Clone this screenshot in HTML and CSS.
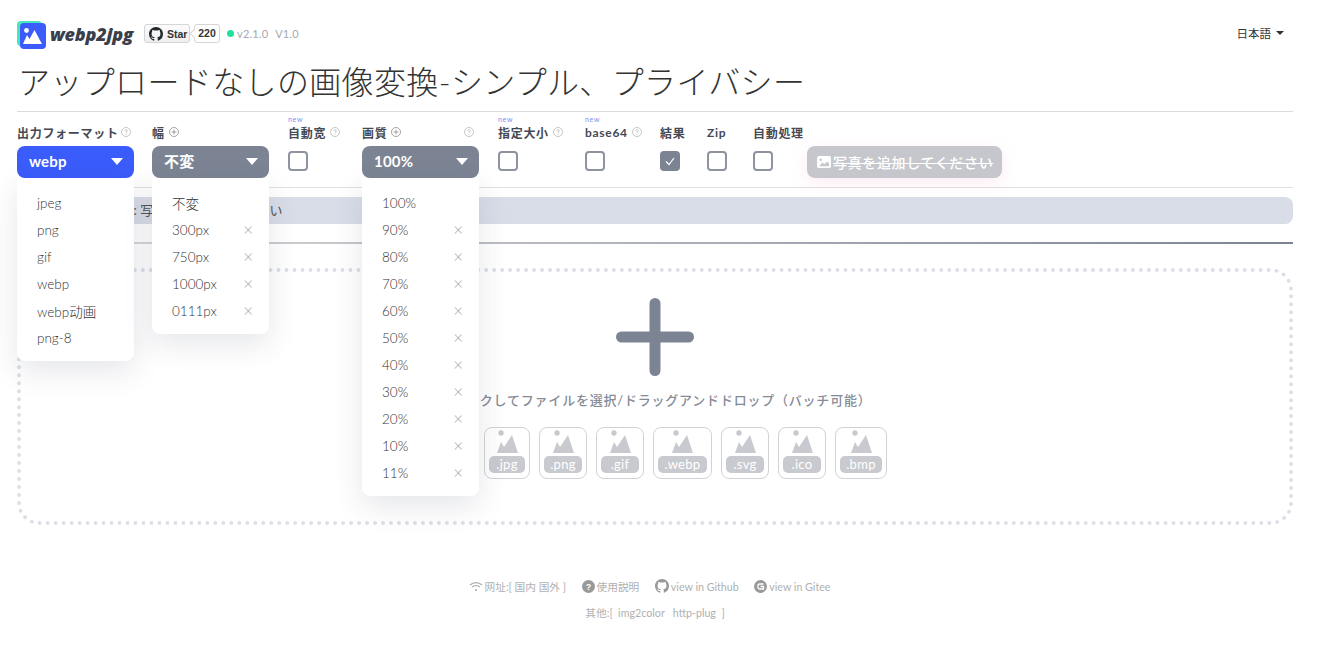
FILE: index.html
```html
<!DOCTYPE html>
<html lang="ja">
<head>
    <meta charset="UTF-8">
    <title>webp2jpg</title>
    <link rel="stylesheet" href="styles.css">
</head>
<body>
<div class="page">

    <header class="top">
        <svg class="logo" width="30" height="28" viewBox="0 0 30 28">
            <rect x="0" y="0" width="25" height="25" rx="4" fill="#45e6c0"/>
            <rect x="3" y="2" width="26" height="26" rx="4" fill="#3b5bfb"/>
            <circle cx="9.5" cy="9.5" r="2.4" fill="#fff"/>
            <path d="M6 23 L10 14 L12.5 18 L17.5 9 L25 23 Z" fill="#fff"/>
        </svg>
        <span class="brand">webp2jpg</span>
        <span class="star">
            <svg width="14" height="14" viewBox="0 0 16 16"><path fill="#24292e" d="M8 0C3.58 0 0 3.58 0 8c0 3.54 2.29 6.53 5.47 7.59.4.07.55-.17.55-.38 0-.19-.01-.82-.01-1.49-2.01.37-2.53-.49-2.69-.94-.09-.23-.48-.94-.82-1.13-.28-.15-.68-.52-.01-.53.63-.01 1.08.58 1.23.82.72 1.21 1.87.87 2.33.66.07-.52.28-.87.51-1.07-1.78-.2-3.64-.89-3.64-3.95 0-.87.31-1.59.82-2.15-.08-.2-.36-1.02.08-2.12 0 0 .67-.21 2.2.82.64-.18 1.32-.27 2-.27s1.36.09 2 .27c1.53-1.04 2.2-.82 2.2-.82.44 1.1.16 1.92.08 2.12.51.56.82 1.27.82 2.15 0 3.07-1.87 3.75-3.65 3.95.29.25.54.73.54 1.48 0 1.07-.01 1.93-.01 2.2 0 .21.15.46.55.38A8.01 8.01 0 0016 8c0-4.42-3.58-8-8-8z"/></svg>
            Star
        </span>
        <span class="star-count">220</span>
        <span class="dot"></span>
        <span class="version">v2.1.0</span>
        <span class="version">V1.0</span>
        <span class="lang">日本語<i class="caret"></i></span>
    </header>

    <h1 class="title">アップロードなしの画像変換-シンプル、プライバシー</h1>

    <section class="controls">
        <div class="col col-select col-format">
            <label class="name">出力フォーマット<svg class="tip tip-near" viewBox="0 0 12 12"><use href="#help"/></svg></label>
            <div class="select select-blue">webp<i class="arrow"></i></div>
            <ul class="menu">
                <li>jpeg</li>
                <li>png</li>
                <li>gif</li>
                <li>webp</li>
                <li>webp动画</li>
                <li>png-8</li>
            </ul>
        </div>

        <div class="col col-select">
            <label class="name">幅<svg class="tip" viewBox="0 0 12 12"><use href="#plus"/></svg></label>
            <div class="select">不変<i class="arrow"></i></div>
            <ul class="menu">
                <li>不変</li>
                <li>300px<span class="del">×</span></li>
                <li>750px<span class="del">×</span></li>
                <li>1000px<span class="del">×</span></li>
                <li>0111px<span class="del">×</span></li>
            </ul>
        </div>

        <div class="col col-auto">
            <label class="name"><em class="new">new</em>自動宽<svg class="tip" viewBox="0 0 12 12"><use href="#help"/></svg></label>
            <span class="check"></span>
        </div>

        <div class="col col-select col-quality">
            <label class="name">画質<svg class="tip" viewBox="0 0 12 12"><use href="#plus"/></svg><svg class="tip tip-end" viewBox="0 0 12 12"><use href="#help"/></svg></label>
            <div class="select">100%<i class="arrow"></i></div>
            <ul class="menu">
                <li>100%</li>
                <li>90%<span class="del">×</span></li>
                <li>80%<span class="del">×</span></li>
                <li>70%<span class="del">×</span></li>
                <li>60%<span class="del">×</span></li>
                <li>50%<span class="del">×</span></li>
                <li>40%<span class="del">×</span></li>
                <li>30%<span class="del">×</span></li>
                <li>20%<span class="del">×</span></li>
                <li>10%<span class="del">×</span></li>
                <li>11%<span class="del">×</span></li>
            </ul>
        </div>

        <div class="col col-size">
            <label class="name"><em class="new">new</em>指定大小<svg class="tip" viewBox="0 0 12 12"><use href="#help"/></svg></label>
            <span class="check"></span>
        </div>

        <div class="col col-base64">
            <label class="name"><em class="new">new</em>base64<svg class="tip" viewBox="0 0 12 12"><use href="#help"/></svg></label>
            <span class="check"></span>
        </div>

        <div class="col col-result">
            <label class="name">結果</label>
            <span class="check checked">
                <svg width="12" height="12" viewBox="0 0 12 12"><path d="M2 6.5 L5 9.5 L10 3" fill="none" stroke="#fff" stroke-width="1.2"/></svg>
            </span>
        </div>

        <div class="col col-zip">
            <label class="name">Zip</label>
            <span class="check"></span>
        </div>

        <div class="col col-process">
            <label class="name">自動処理</label>
            <span class="check"></span>
        </div>

        <button class="add">
            <svg width="14" height="12" viewBox="0 0 15 13"><rect width="15" height="13" rx="2" fill="#fff"/><circle cx="4" cy="4" r="1.3" fill="#c5c7cc"/><path d="M2 11 L6 7 L8 9 L11 6 L13 8 V11 Z" fill="#c5c7cc"/></svg>
            <span class="add-text">写真を追加してください</span>
        </button>
    </section>

    <div class="notice">プロンプト: 写真を追加してください</div>
    <div class="progress"></div>

    <section class="drop">
        <svg class="drop-plus" width="78" height="78" viewBox="0 0 78 78">
            <path d="M5.5 39 H72.5 M39 5.5 V72.5" stroke="#7c8494" stroke-width="11" stroke-linecap="round"/>
        </svg>
        <p class="drop-text">クリックしてファイルを選択/ドラッグアンドドロップ（バッチ可能）</p>
        <div class="types">
            <div class="type type-bmp"><svg class="pic"><use href="#pic"/></svg><span>.jpeg</span></div>
            <div class="type type-jpg"><svg class="pic"><use href="#pic"/></svg><span>.jpg</span></div>
            <div class="type"><svg class="pic"><use href="#pic"/></svg><span>.png</span></div>
            <div class="type"><svg class="pic"><use href="#pic"/></svg><span>.gif</span></div>
            <div class="type type-webp"><svg class="pic"><use href="#pic"/></svg><span>.webp</span></div>
            <div class="type"><svg class="pic"><use href="#pic"/></svg><span>.svg</span></div>
            <div class="type"><svg class="pic"><use href="#pic"/></svg><span>.ico</span></div>
            <div class="type type-bmp"><svg class="pic"><use href="#pic"/></svg><span>.bmp</span></div>
        </div>
    </section>

    <footer class="foot">
        <div class="foot-row foot-links">
            <span class="foot-item">
                <svg width="14" height="11" viewBox="0 0 14 11"><path d="M1 4 C4.5 .8 9.5 .8 13 4 M3 6.2 C5.4 4.2 8.6 4.2 11 6.2" fill="none" stroke="#aaa" stroke-width="1.1"/><circle cx="7" cy="9" r="1.1" fill="#aaa"/></svg>
                网址:[ 国内 国外 ]
            </span>
            <span class="foot-item">
                <svg width="13" height="13" viewBox="0 0 13 13"><circle cx="6.5" cy="6.5" r="6.5" fill="#999"/><text x="6.5" y="10" text-anchor="middle" font-size="9" font-weight="700" fill="#fff" font-family="Liberation Sans">?</text></svg>
                使用説明
            </span>
            <span class="foot-item">
                <svg width="14" height="14" viewBox="0 0 16 16"><path fill="#999" d="M8 0C3.58 0 0 3.58 0 8c0 3.54 2.29 6.53 5.47 7.59.4.07.55-.17.55-.38 0-.19-.01-.82-.01-1.49-2.01.37-2.53-.49-2.69-.94-.09-.23-.48-.94-.82-1.13-.28-.15-.68-.52-.01-.53.63-.01 1.08.58 1.23.82.72 1.21 1.87.87 2.33.66.07-.52.28-.87.51-1.07-1.78-.2-3.64-.89-3.64-3.95 0-.87.31-1.59.82-2.15-.08-.2-.36-1.02.08-2.12 0 0 .67-.21 2.2.82.64-.18 1.32-.27 2-.27s1.36.09 2 .27c1.53-1.04 2.2-.82 2.2-.82.44 1.1.16 1.92.08 2.12.51.56.82 1.27.82 2.15 0 3.07-1.87 3.75-3.65 3.95.29.25.54.73.54 1.48 0 1.07-.01 1.93-.01 2.2 0 .21.15.46.55.38A8.01 8.01 0 0016 8c0-4.42-3.58-8-8-8z"/></svg>
                view in Github
            </span>
            <span class="foot-item">
                <svg width="13" height="13" viewBox="0 0 13 13"><circle cx="6.5" cy="6.5" r="6.5" fill="#999"/><path d="M9.5 4 H5.5 Q4 4 4 5.5 V7.5 Q4 9 5.5 9 H9.5 V6.5 H6.5" fill="none" stroke="#fff" stroke-width="1.3"/></svg>
                view in Gitee
            </span>
        </div>
        <div class="foot-row foot-other">其他:[ &nbsp;img2color &nbsp; http-plug &nbsp;]</div>
    </footer>

</div>

<svg class="defs" width="0" height="0">
    <symbol id="help" viewBox="0 0 12 12">
        <circle cx="6" cy="6" r="5.4" fill="none" stroke="#aaa" stroke-width=".8"/>
        <path d="M4.4 4.8 C4.4 2.8 7.6 2.8 7.6 4.8 C7.6 6 6 6 6 7.4 M6 8.4 V9.3" fill="none" stroke="#aaa" stroke-width=".8"/>
    </symbol>
    <symbol id="plus" viewBox="0 0 12 12">
        <circle cx="6" cy="6" r="5.4" fill="none" stroke="#777" stroke-width=".8"/>
        <path d="M6 3 V9 M3 6 H9" stroke="#777" stroke-width=".8"/>
    </symbol>
    <symbol id="pic" viewBox="0 0 21 23">
        <circle cx="4" cy="3" r="2.7" fill="#c8cacf"/>
        <path d="M0 23 L4 12 L7 17 L15 5 L21 23 Z" fill="#c8cacf"/>
    </symbol>
</svg>
</body>
</html>
```

FILE: styles.css
```css
* {
    box-sizing: border-box;
}

body {
    margin: 0;
    background: #fff;
    font-family: Lato, "Noto Sans CJK JP", sans-serif;
    color: #333;
}

.page {
    padding: 20px 35px 0 17px;
}

.defs {
    position: absolute;
}

/* top bar */
.top {
    display: flex;
    align-items: center;
    height: 27px;
}

.logo {
    flex: none;
    margin-top: 2px;
}

.brand {
    margin-left: 3px;
    font-family: "Open Sans", sans-serif;
    font-size: 18px;
    font-weight: 800;
    font-style: italic;
    letter-spacing: -.2px;
    color: #3a3f4b;
}

.star {
    display: flex;
    align-items: center;
    gap: 4px;
    height: 19px;
    width: 46px;
    margin-left: 11px;
    padding-left: 4px;
    border: 1px solid #d5d5d5;
    border-radius: 3px;
    background: linear-gradient(#fcfcfc, #eee);
    font-family: "Liberation Sans", sans-serif;
    font-size: 10.5px;
    font-weight: 700;
    color: #333;
}

.star-count {
    position: relative;
    width: 26px;
    height: 19px;
    margin-left: 4px;
    border: 1px solid #d5d5d5;
    border-radius: 3px;
    background: #fff;
    font-family: "Liberation Sans", sans-serif;
    font-size: 10.5px;
    font-weight: 700;
    line-height: 17px;
    text-align: center;
}

.star-count::before {
    content: "";
    position: absolute;
    left: -4px;
    top: 5px;
    width: 6px;
    height: 6px;
    border-left: 1px solid #d5d5d5;
    border-bottom: 1px solid #d5d5d5;
    background: #fff;
    transform: rotate(45deg);
}

.dot {
    width: 7px;
    height: 7px;
    margin-left: 7px;
    border-radius: 50%;
    background: #1fe09c;
}

.version {
    margin-left: 3px;
    margin-right: 4px;
    font-size: 11px;
    color: #a4a8b0;
    letter-spacing: .2px;
}

.lang {
    display: flex;
    align-items: center;
    margin-left: auto;
    margin-right: 9px;
    margin-bottom: 2px;
    font-size: 11.5px;
    color: #333;
}

.caret {
    width: 0;
    height: 0;
    margin-left: 5px;
    border: 4px solid transparent;
    border-top: 4px solid #333;
    border-bottom: 0;
}

.title {
    margin: 13px 0 0 1px;
    padding-bottom: 8px;
    font-size: 32px;
    font-weight: 300;
    letter-spacing: .36px;
    line-height: 43px;
    color: #333;
    white-space: nowrap;
}

/* option row */
.controls {
    display: flex;
    height: 77px;
    padding-top: 11px;
    border-top: 1px solid #dcdcdc;
    border-bottom: 1px solid #dcdfe6;
}

.col {
    position: relative;
    flex: none;
}

.col-select {
    width: 117px;
    margin-right: 18px;
}

.col-auto {
    width: 74px;
    margin-left: 1px;
}

.col-quality {
    margin-right: 19px;
}

.col-size {
    width: 87px;
}

.col-base64 {
    width: 75px;
}

.col-result {
    width: 47px;
}

.col-zip {
    width: 46px;
}

.col-process {
    width: 54px;
}

.name {
    position: relative;
    display: flex;
    align-items: center;
    height: 18px;
    font-size: 12px;
    font-weight: 700;
    color: #444953;
    letter-spacing: .7px;
    white-space: nowrap;
}

.new {
    position: absolute;
    left: 0;
    top: -8px;
    font-size: 7px;
    font-style: normal;
    font-weight: 400;
    line-height: 8px;
    color: #7c8ef0;
}

.tip {
    width: 10px;
    height: 10px;
    margin-left: 4px;
}

.tip-near {
    margin-left: 2px;
}

.tip-end {
    margin-left: auto;
    margin-right: 5px;
}

.select {
    position: relative;
    height: 32px;
    margin-top: 5px;
    padding-left: 12px;
    border-radius: 8px;
    background: #7c8494;
    font-size: 15px;
    font-weight: 700;
    letter-spacing: .2px;
    line-height: 30px;
    color: #fff;
}

.select-blue {
    background: #3a5cfb;
}

.arrow {
    position: absolute;
    right: 11px;
    top: 12px;
    width: 0;
    height: 0;
    border: 6px solid transparent;
    border-top: 7px solid #fff;
    border-bottom: 0;
}

.menu {
    position: absolute;
    z-index: 10;
    left: 0;
    right: 0;
    top: 55px;
    margin: 0;
    padding: 11px 0 10px;
    list-style: none;
    background: #fff;
    border-radius: 0 0 8px 8px;
    box-shadow: 0 10px 30px rgba(40, 50, 70, .12);
}

.menu li {
    display: flex;
    justify-content: space-between;
    align-items: center;
    height: 27px;
    padding: 0 16px 0 20px;
    font-size: 13.5px;
    font-weight: 300;
    color: #333;
}

.del {
    font-size: 17px;
    font-weight: 300;
    line-height: 20px;
    color: #aaa;
}

.check {
    display: flex;
    align-items: center;
    justify-content: center;
    width: 20px;
    height: 20px;
    margin-top: 10px;
    border: 2px solid #8d939f;
    border-radius: 4px;
    background: #fff;
}

.checked {
    background: #7c8494;
    border-color: #7c8494;
}

.add {
    display: flex;
    align-items: center;
    gap: 2px;
    width: 195px;
    height: 32px;
    margin-top: 23px;
    padding: 0 0 0 10px;
    border: 0;
    border-radius: 8px;
    background: #c5c7cc;
    box-shadow: 0 4px 16px rgba(255, 150, 190, .2);
    font-family: inherit;
    font-size: 14px;
    font-weight: 500;
    letter-spacing: .65px;
    color: #fff;
}

.add-text {
    text-decoration: line-through;
    white-space: nowrap;
}

.notice {
    height: 27px;
    margin-top: 9px;
    padding-left: 52px;
    border-radius: 8px;
    background: #d9dde8;
    font-size: 13px;
    line-height: 27px;
    color: #555;
}

.progress {
    height: 2px;
    margin-top: 18px;
    background: linear-gradient(to right, #dedede, #7c8494);
}

/* drop area */
.drop {
    display: flex;
    flex-direction: column;
    align-items: center;
    height: 257px;
    margin-top: 24px;
    padding-top: 26px;
    border: 4px dotted #dcdfe8;
    border-radius: 22px;
}

.drop-text {
    margin: 14px 0 0;
    font-size: 13px;
    font-weight: 500;
    letter-spacing: .78px;
    color: #858b97;
}

.types {
    display: flex;
    gap: 9px;
    margin-top: 18px;
}

.type {
    display: flex;
    flex-direction: column;
    align-items: center;
    width: 48px;
    height: 52px;
    padding: 2px 4px 0;
    border: 1px solid #d0d2d6;
    border-radius: 8px;
}

.type-jpg {
    width: 46px;
}

.type-webp {
    width: 59px;
}

.type-bmp {
    width: 52px;
}

.pic {
    width: 21px;
    height: 23px;
    margin-bottom: 3px;
}

.type span {
    width: 100%;
    border-radius: 5px;
    background: #c8cacf;
    font-size: 13px;
    line-height: 17px;
    letter-spacing: .3px;
    text-align: center;
    color: #fff;
}

/* footer */
.foot {
    margin-top: 52px;
    font-size: 10.7px;
    color: #b0b0b0;
    text-align: center;
}

.foot-row {
    display: flex;
    justify-content: center;
    align-items: center;
    height: 18px;
}

.foot-links {
    gap: 15.5px;
    padding-right: 11px;
}

.foot-item {
    display: flex;
    align-items: center;
    gap: 2px;
}

.foot-other {
    margin-top: 8px;
}
```
